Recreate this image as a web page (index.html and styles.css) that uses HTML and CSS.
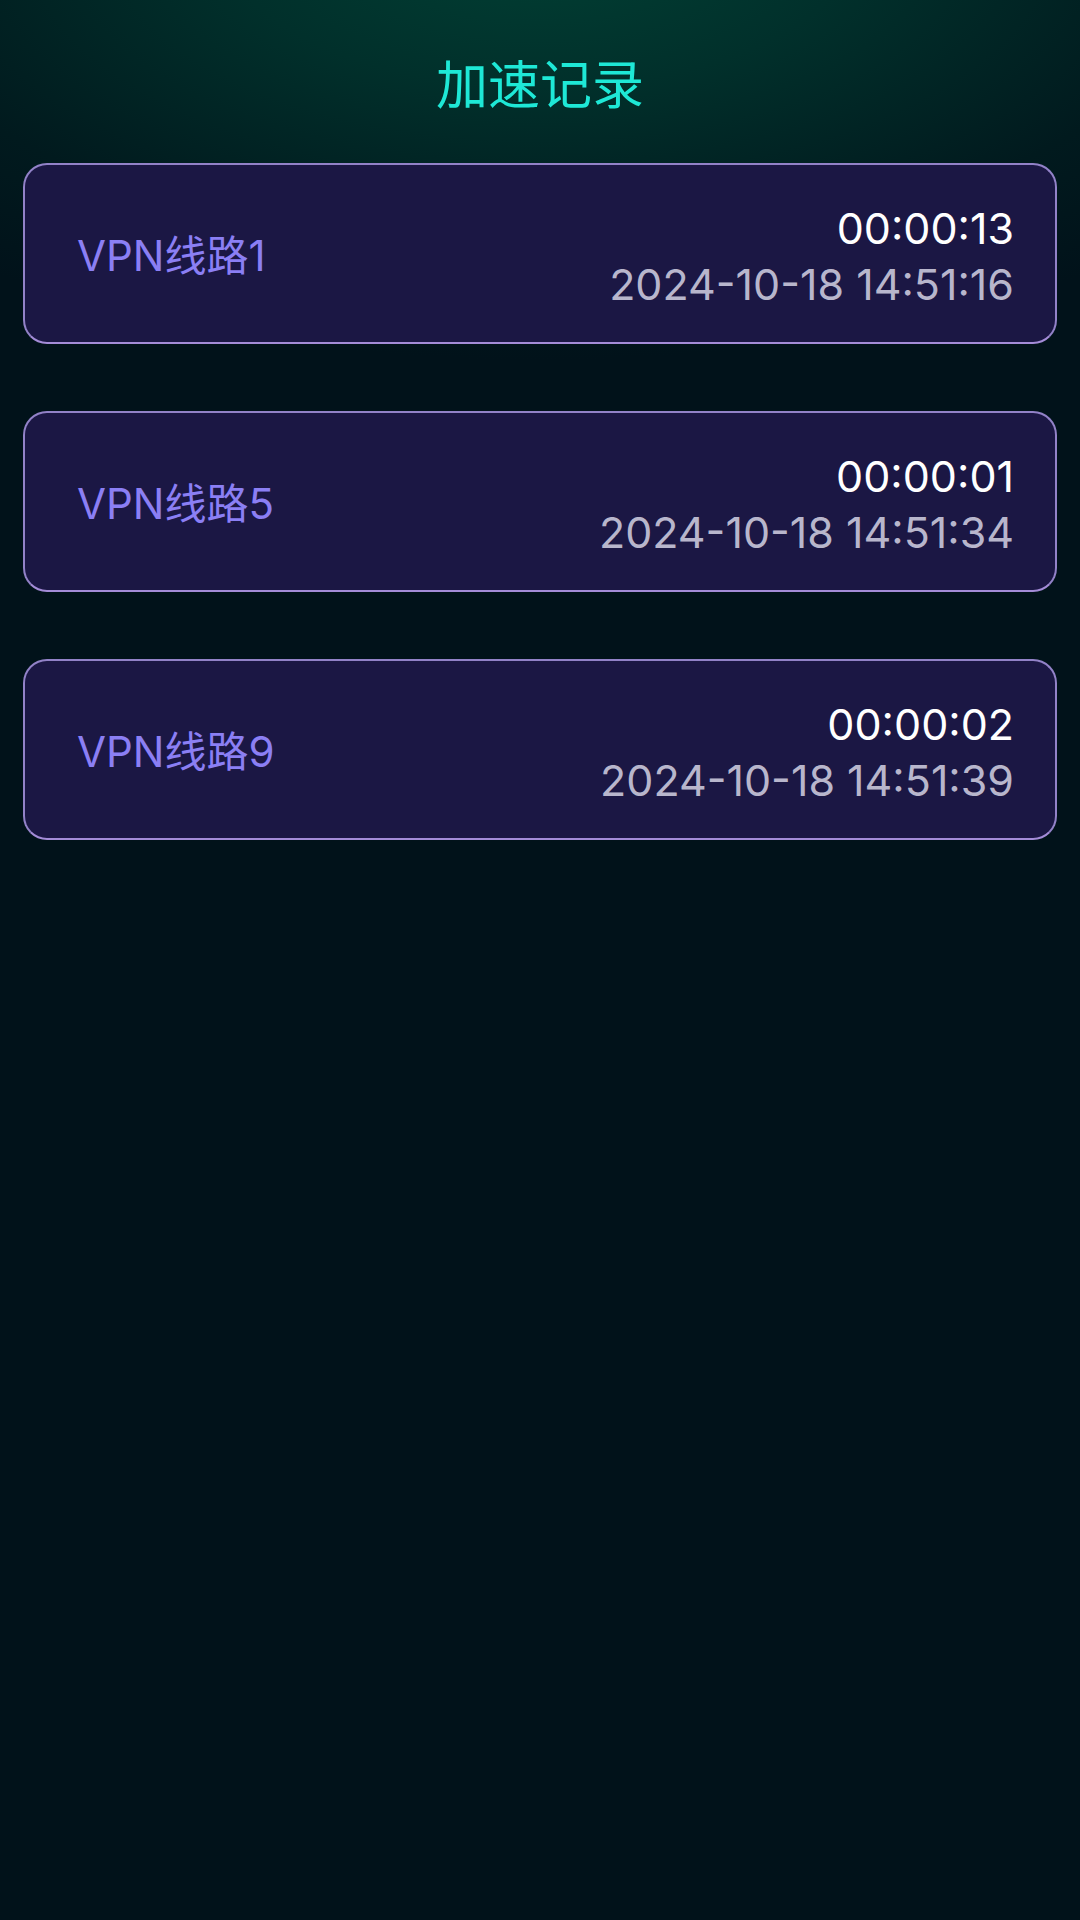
FILE: index.html
```html
<!DOCTYPE html>
<html lang="zh-CN">
<head>
<meta charset="utf-8">
<title>加速记录</title>
<link rel="stylesheet" href="styles.css">
</head>
<body>
<div class="page">
  <header class="header">
    <h1 class="title">加速记录</h1>
  </header>
  <main class="list">
    <div class="card">
      <div class="name">VPN线路1</div>
      <div class="meta">
        <div class="duration">00:00:13</div>
        <div class="date">2024-10-18 14:51:16</div>
      </div>
    </div>
    <div class="card">
      <div class="name">VPN线路5</div>
      <div class="meta">
        <div class="duration">00:00:01</div>
        <div class="date">2024-10-18 14:51:34</div>
      </div>
    </div>
    <div class="card">
      <div class="name">VPN线路9</div>
      <div class="meta">
        <div class="duration">00:00:02</div>
        <div class="date">2024-10-18 14:51:39</div>
      </div>
    </div>
  </main>
</div>
</body>
</html>
```
FILE: styles.css
```css
html, body {
  margin: 0;
  padding: 0;
}
body {
  width: 1080px;
  height: 1920px;
  background-color: #01121a;
  background-image: radial-gradient(ellipse 900px 420px at 50% -60px, #014034 0%, #01302b 35%, #011a1e 75%, #01121a 100%);
  background-repeat: no-repeat;
  font-family: Inter, "Noto Sans CJK SC", sans-serif;
}
.page {
  display: flex;
  flex-direction: column;
}
.header {
  height: 163px;
  display: flex;
  justify-content: center;
}
.title {
  margin: 52px 0 0;
  font-family: "Noto Sans CJK SC", sans-serif;
  font-size: 52px;
  font-weight: 400;
  line-height: 60px;
  color: #1ee8d6;
}
.list {
  display: flex;
  flex-direction: column;
  gap: 67px;
  padding: 0 23px;
}
.card {
  box-sizing: border-box;
  height: 181px;
  border: 2px solid #9282c8;
  border-bottom-color: #a48cd8;
  border-radius: 24px;
  background: #1b1744;
  display: flex;
  align-items: center;
  justify-content: space-between;
  padding: 5px 41px 0 52px;
}
.name {
  font-size: 42px;
  color: #8b7ff4;
  line-height: 56px;
}
.meta {
  display: flex;
  flex-direction: column;
  align-items: flex-end;
}
.duration {
  font-size: 43px;
  line-height: 56px;
  color: #ffffff;
}
.date {
  font-size: 43px;
  line-height: 56px;
  color: #b8b6cc;
}
```
